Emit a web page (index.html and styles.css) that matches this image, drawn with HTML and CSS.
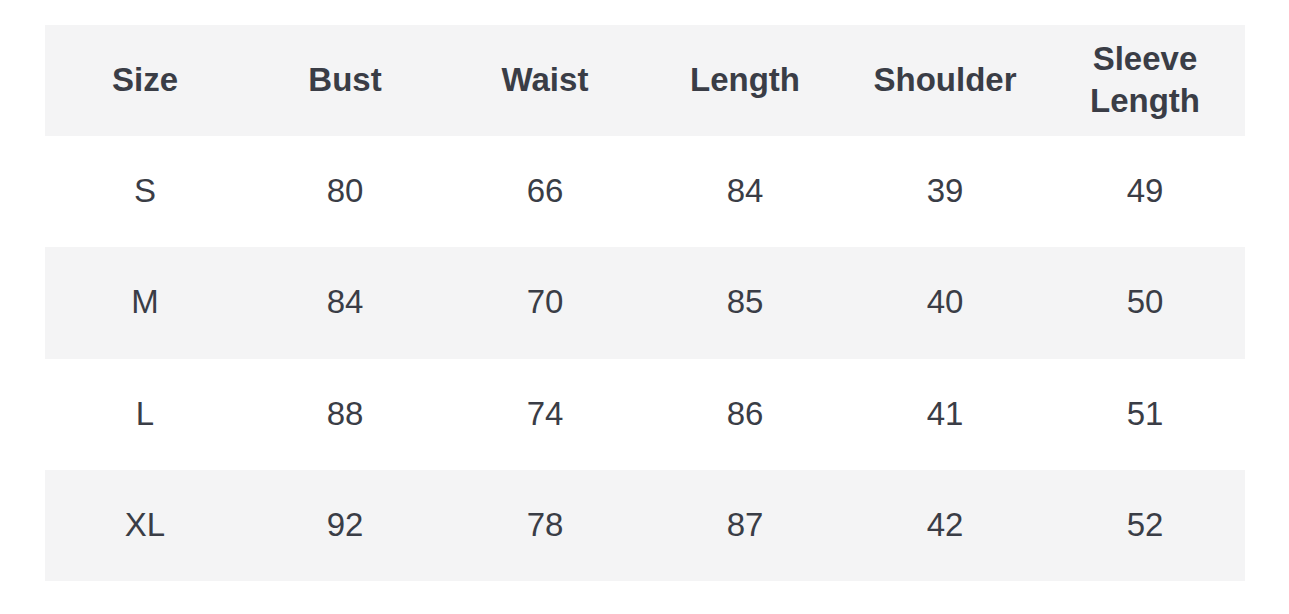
FILE: index.html
```html
<!DOCTYPE html>
<html>
<head>
<meta charset="utf-8">
<link rel="stylesheet" href="styles.css">
</head>
<body>
<div class="table">
  <div class="row head">
    <div class="cell">Size</div>
    <div class="cell">Bust</div>
    <div class="cell">Waist</div>
    <div class="cell">Length</div>
    <div class="cell">Shoulder</div>
    <div class="cell">Sleeve<br>Length</div>
  </div>
  <div class="row">
    <div class="cell">S</div><div class="cell">80</div><div class="cell">66</div><div class="cell">84</div><div class="cell">39</div><div class="cell">49</div>
  </div>
  <div class="row alt">
    <div class="cell">M</div><div class="cell">84</div><div class="cell">70</div><div class="cell">85</div><div class="cell">40</div><div class="cell">50</div>
  </div>
  <div class="row">
    <div class="cell">L</div><div class="cell">88</div><div class="cell">74</div><div class="cell">86</div><div class="cell">41</div><div class="cell">51</div>
  </div>
  <div class="row alt">
    <div class="cell">XL</div><div class="cell">92</div><div class="cell">78</div><div class="cell">87</div><div class="cell">42</div><div class="cell">52</div>
  </div>
</div>
</body>
</html>
```
FILE: styles.css
```css
html, body {
  margin: 0;
  padding: 0;
  background: #ffffff;
}
body {
  padding: 25px 44px 0 45px;
  font-family: "Liberation Sans", Arial, sans-serif;
  color: #3a3d46;
}
.table {
  width: 1200px;
  display: flex;
  flex-direction: column;
}
.row {
  display: grid;
  grid-template-columns: repeat(6, 200px);
  height: 111.2px;
}
.head, .alt {
  background: #f4f4f5;
}
.cell {
  display: flex;
  align-items: center;
  justify-content: center;
  text-align: center;
  font-size: 33px;
  line-height: 42px;
  padding-bottom: 1px;
}
.head .cell {
  font-weight: bold;
}
```
